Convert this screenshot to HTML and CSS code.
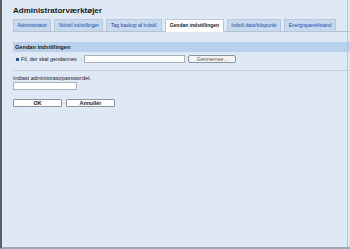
FILE: index.html
```html
<!DOCTYPE html>
<html lang="da">
<head>
  <meta charset="UTF-8">
  <title>Administratorværktøjer</title>
  <link rel="stylesheet" href="styles.css">
</head>
<body>
  <div class="frame">
    <h1 class="title">Administratorværktøjer</h1>

    <div class="tabs">
      <span class="tab">Administrator</span>
      <span class="tab">Nulstil indstillinger</span>
      <span class="tab">Tag backup af indstil.</span>
      <span class="tab active">Gendan indstillingen</span>
      <span class="tab">Indstil dato/tidspunkt</span>
      <span class="tab">Energisparetilstand</span>
    </div>

    <div class="section">
      <div class="sechead">Gendan indstillingen</div>
      <div class="filerow">
        <span class="bullet"></span>
        <span class="label">Fil, der skal gendannes</span>
        <span class="colon">:</span>
        <input class="field filefield" type="text">
        <button class="btn browse">Gennemse...</button>
      </div>
    </div>

    <div class="pwblock">
      <div class="pwlabel">Indtast administratorpasswordet.</div>
      <input class="field pwfield" type="password">
      <div class="actions">
        <button class="btn wide">OK</button>
        <button class="btn wide">Annullér</button>
      </div>
    </div>
  </div>
</body>
</html>
```

FILE: styles.css
```css
*{
  margin:0;
  padding:0;
  box-sizing:border-box;
}
html,body{
  width:350px;
  height:249px;
  overflow:hidden;
}
body{
  font-family:"Liberation Sans", Arial, sans-serif;
  background-color:#dfe9f5;
  color:#222;
}
.frame{
  height:249px;
  border-left:2px solid #5a5f66;
  border-bottom:2px solid #9aa6b0;
  padding:6px 0 0 11px;
  position:relative;
}
.frame::after{
  content:"";
  position:absolute;
  right:2px;
  top:0;
  bottom:0;
  border-right:1px solid #b9c6d3;
}
.title{
  font-size:8px;
  font-weight:bold;
  color:#1a1a1a;
  height:13px;
  line-height:9px;
}
.tabs{
  display:flex;
  gap:3px;
  height:13px;
  border-bottom:1px solid #b5c3d2;
}
.tab{
  font-size:5px;
  color:#2348a8;
  background-color:#c6d9ee;
  border:1px solid #b9c9db;
  border-bottom:0;
  height:12px;
  line-height:11px;
  padding:0 3.5px;
  white-space:nowrap;
}
.tab.active{
  background-color:#ffffff;
  color:#1a1a1a;
  font-weight:bold;
  height:13px;
  margin-bottom:-1px;
}
.section{
  margin-top:10px;
}
.sechead{
  background-color:#b9d1ea;
  font-size:5.6px;
  font-weight:bold;
  color:#1a1a1a;
  height:10px;
  line-height:10px;
  padding-left:2px;
}
.filerow{
  display:flex;
  align-items:center;
  height:19px;
  padding-left:3px;
  padding-bottom:4px;
  border-bottom:1px solid #c4d0dc;
}
.bullet{
  width:3px;
  height:3px;
  background-color:#2a4ea8;
  margin-right:2px;
}
.label,.colon,.pwlabel{
  font-size:5.4px;
  color:#222;
}
.colon{
  margin-left:4px;
  margin-right:2px;
}
.field{
  background-color:#fff;
  border:1px solid #a9b4bf;
  height:8px;
}
.filefield{
  width:101px;
}
.btn{
  font-family:"Liberation Sans", Arial, sans-serif;
  font-size:5.4px;
  color:#222;
  background-color:#f4f4f4;
  border:1px solid #8c96a0;
  border-radius:1px;
  height:8px;
  line-height:6px;
}
.browse{
  width:48px;
  margin-left:3px;
  border-radius:2px;
  color:#555;
}
.pwblock{
  padding-top:4px;
}
.pwlabel{
  height:6px;
  line-height:6px;
}
.pwfield{
  display:block;
  width:64px;
  margin-top:1px;
}
.actions{
  display:flex;
  gap:4px;
  margin-top:9px;
}
.wide{
  width:49px;
  font-weight:bold;
  background-color:#fdfdfd;
}
```
